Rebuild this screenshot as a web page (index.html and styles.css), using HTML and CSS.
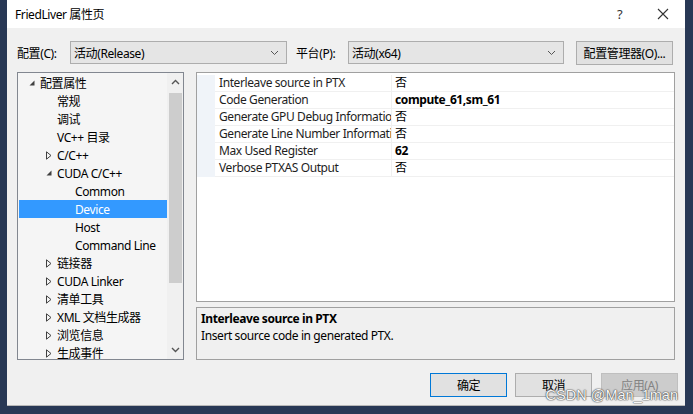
FILE: index.html
```html
<!DOCTYPE html>
<html>
<head>
<meta charset="utf-8">
<link rel="stylesheet" href="styles.css">
</head>
<body>
<div class="dialog">
  <div class="titlebar">
    <span class="title">FriedLiver 属性页</span>
    <span class="tb-help">?</span>
    <span class="tb-close"><svg width="12" height="12" viewBox="0 0 12 12"><path d="M1 1L11 11M11 1L1 11" stroke="#333" stroke-width="1.1" fill="none"/></svg></span>
  </div>
  <div class="toolbar">
    <span class="lbl">配置(C):</span>
    <div class="combo c1"><span>活动(Release)</span><svg class="chev" width="9" height="6" viewBox="0 0 9 6"><path d="M1 1L4.5 4.5L8 1" stroke="#555" fill="none"/></svg></div>
    <span class="lbl lbl2">平台(P):</span>
    <div class="combo c2"><span>活动(x64)</span><svg class="chev" width="9" height="6" viewBox="0 0 9 6"><path d="M1 1L4.5 4.5L8 1" stroke="#555" fill="none"/></svg></div>
    <div class="btn cfgbtn">配置管理器(O)...</div>
  </div>
  <div class="main">
    <div class="tree">
      <div class="items">
        <div class="item l0"><span class="arr"><svg width="6" height="6" viewBox="0 0 6 6"><path d="M5.5 0.5V5.5H0.5Z" fill="#404040"/></svg></span>配置属性</div>
        <div class="item l1"><span class="arr"></span>常规</div>
        <div class="item l1"><span class="arr"></span>调试</div>
        <div class="item l1"><span class="arr"></span>VC++ 目录</div>
        <div class="item l1"><span class="arr"><svg width="6" height="9" viewBox="0 0 6 9"><path d="M0.5 0.8V8.2L5 4.5Z" fill="none" stroke="#404040"/></svg></span>C/C++</div>
        <div class="item l1"><span class="arr"><svg width="6" height="6" viewBox="0 0 6 6"><path d="M5.5 0.5V5.5H0.5Z" fill="#404040"/></svg></span>CUDA C/C++</div>
        <div class="item l2"><span class="arr"></span>Common</div>
        <div class="item l2 sel"><span class="arr"></span>Device</div>
        <div class="item l2"><span class="arr"></span>Host</div>
        <div class="item l2"><span class="arr"></span>Command Line</div>
        <div class="item l1"><span class="arr"><svg width="6" height="9" viewBox="0 0 6 9"><path d="M0.5 0.8V8.2L5 4.5Z" fill="none" stroke="#404040"/></svg></span>链接器</div>
        <div class="item l1"><span class="arr"><svg width="6" height="9" viewBox="0 0 6 9"><path d="M0.5 0.8V8.2L5 4.5Z" fill="none" stroke="#404040"/></svg></span>CUDA Linker</div>
        <div class="item l1"><span class="arr"><svg width="6" height="9" viewBox="0 0 6 9"><path d="M0.5 0.8V8.2L5 4.5Z" fill="none" stroke="#404040"/></svg></span>清单工具</div>
        <div class="item l1"><span class="arr"><svg width="6" height="9" viewBox="0 0 6 9"><path d="M0.5 0.8V8.2L5 4.5Z" fill="none" stroke="#404040"/></svg></span>XML 文档生成器</div>
        <div class="item l1"><span class="arr"><svg width="6" height="9" viewBox="0 0 6 9"><path d="M0.5 0.8V8.2L5 4.5Z" fill="none" stroke="#404040"/></svg></span>浏览信息</div>
        <div class="item l1"><span class="arr"><svg width="6" height="9" viewBox="0 0 6 9"><path d="M0.5 0.8V8.2L5 4.5Z" fill="none" stroke="#404040"/></svg></span>生成事件</div>
      </div>
      <div class="vscroll">
        <svg class="sarrow" width="9" height="6" viewBox="0 0 9 6"><path d="M1 5L4.5 1.5L8 5" stroke="#555" stroke-width="1.4" fill="none"/></svg>
        <div class="thumb"></div>
        <svg class="sarrow down" width="9" height="6" viewBox="0 0 9 6"><path d="M1 1L4.5 4.5L8 1" stroke="#555" stroke-width="1.4" fill="none"/></svg>
      </div>
    </div>
    <div class="right">
      <div class="grid">
        <div class="row"><div class="gut"></div><div class="name">Interleave source in PTX</div><div class="val">否</div></div>
        <div class="row"><div class="gut"></div><div class="name">Code Generation</div><div class="val b">compute_61,sm_61</div></div>
        <div class="row"><div class="gut"></div><div class="name">Generate GPU Debug Informatio</div><div class="val">否</div></div>
        <div class="row"><div class="gut"></div><div class="name">Generate Line Number Informati</div><div class="val">否</div></div>
        <div class="row"><div class="gut"></div><div class="name">Max Used Register</div><div class="val b">62</div></div>
        <div class="row"><div class="gut"></div><div class="name">Verbose PTXAS Output</div><div class="val">否</div></div>
      </div>
      <div class="desc">
        <div class="dtitle">Interleave source in PTX</div>
        <div class="dtext">Insert source code in generated PTX.</div>
      </div>
    </div>
  </div>
  <div class="buttons">
    <div class="btn ok">确定</div>
    <div class="btn">取消</div>
    <div class="btn dis">应用(A)</div>
    <span class="wm">CSDN @Man_1man</span>
  </div>
</div>
</body>
</html>
```
FILE: styles.css
```css
* { box-sizing: border-box; }
html, body { margin: 0; padding: 0; }
body {
  width: 693px; height: 414px;
  background: #283855;
  font-family: "Noto Sans", "Noto Sans CJK SC", sans-serif;
  font-size: 12px;
  letter-spacing: -0.4px;
  color: #000;
  padding-left: 7px;
  overflow: hidden;
}
.dialog {
  width: 678px; height: 406px;
  background: #f0f0f0;
  display: flex; flex-direction: column;
  position: relative;
  border-bottom: 1px solid #b8b8b8;
}
.titlebar {
  height: 28px; background: #fff;
  display: flex; align-items: center;
  padding-left: 8px;
}
.title { flex: 1; font-size: 12px; }
.tb-help { width: 14px; margin-right: 26px; font-size: 13px; color: #333; }
.tb-close { width: 12px; margin-right: 16px; display: flex; }
.toolbar {
  display: flex; align-items: center;
  margin-top: 13px; height: 23px;
  padding-left: 10px;
}
.lbl { width: 53px; }
.lbl2 { width: 52px; margin-left: 9px; }
.combo {
  height: 23px; border: 1px solid #adadad; background: #e5e5e5;
  display: flex; align-items: center; justify-content: space-between;
  padding: 0 5px 0 3px;
}
.c1 { width: 217px; }
.c2 { width: 216px; }
.chev { margin-right: 2px; }
.btn {
  height: 24px; border: 1px solid #adadad; background: #e1e1e1;
  display: flex; align-items: center; justify-content: center;
}
.cfgbtn { width: 97px; height: 24px; margin-left: 12px; }
.main {
  display: flex; margin-top: 8px; margin-left: 10px;
  height: 288px;
}
.tree {
  width: 167px; height: 288px;
  border: 1px solid #828790; background: #f5f5f5;
  display: flex;
}
.items { flex: 1; padding-top: 1px; padding-left: 1px; }
.item {
  height: 18px; display: flex; align-items: center; white-space: nowrap;
}
.arr { width: 11px; display: flex; align-items: center; }
.l0 { padding-left: 10px; }
.l1 { padding-left: 27px; }
.l2 { padding-left: 45px; }
.sel { background: #3399ff; color: #fff; }
.vscroll {
  width: 16px; background: #f0f0f0;
  display: flex; flex-direction: column; align-items: center;
}
.sarrow { margin-top: 6px; margin-bottom: 8px; }
.thumb { width: 13px; height: 190px; background: #cdcdcd; }
.sarrow.down { margin-top: auto; margin-bottom: 6px; }
.right {
  margin-left: 12px; width: 479px;
  display: flex; flex-direction: column;
}
.grid {
  height: 230px; background: #fff; border: 1px solid #a0a0a0;
  padding-top: 2px;
}
.row { display: flex; height: 17px; }
.gut { width: 18px; background: #f0f4f9; }
.name {
  width: 177px; padding-left: 4px; white-space: nowrap; overflow: hidden;
  border-bottom: 1px solid #f0f0f0; border-right: 1px solid #f0f0f0;
  line-height: 16px; color: #1e1e1e;
}
.val {
  flex: 1; padding-left: 3px; border-bottom: 1px solid #f0f0f0;
  line-height: 16px;
}
.val.b { font-weight: bold; }
.desc {
  margin-top: 5px; height: 53px;
  border: 1px solid #a0a0a0; background: #f0f0f0;
  padding: 3px 4px;
}
.dtitle { font-weight: bold; line-height: 16px; }
.dtext { line-height: 16px; margin-top: 1px; }
.buttons {
  display: flex; justify-content: flex-end;
  margin-top: 13px; padding-right: 7px; gap: 9px;
  position: relative;
}
.buttons .btn { width: 77px; }
.ok { border: 1px solid #0078d7; margin-right: -1px; }
.dis { background: #cccccc; border-color: #bfbfbf; color: #838383; }
.wm {
  position: absolute; right: 7px; top: 14px;
  font-family: "Liberation Sans", sans-serif; font-size: 14.5px;
  letter-spacing: 0;
  color: #f6f6f6;
  text-shadow: 0 0 1px #444, 0 0 1px #444, 0 0 2px #777;
}
```
